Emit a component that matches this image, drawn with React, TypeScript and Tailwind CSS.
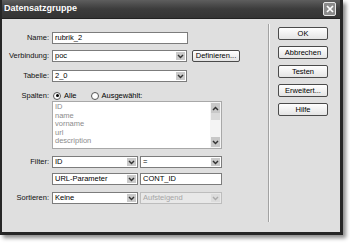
import React from "react"

const Chevron = ({ color = "#333" }: { color?: string }) => (
    <svg width="7" height="5" viewBox="0 0 7 5">
        <path d="M1 1 L3.5 3.6 L6 1" stroke={color} strokeWidth="1.4" fill="none" />
    </svg>
)

const ChevronUp = () => (
    <svg width="7" height="5" viewBox="0 0 7 5">
        <path d="M1 4 L3.5 1.4 L6 4" stroke="#333" strokeWidth="1.4" fill="none" />
    </svg>
)

const Select = ({ value, className = "", disabled = false }: { value: string; className?: string; disabled?: boolean }) => (
    <div
        className={`flex h-[12px] items-stretch border ${
            disabled ? "border-[#bdbdbd] bg-[#e8e8e8] text-[#a6a6a6]" : "border-[#7c7c7c] bg-white text-black"
        } ${className}`}
    >
        <span className="flex-1 truncate pl-[2px] leading-[10px]">{value}</span>
        <span className={`m-[1px] flex w-[9px] items-center justify-center ${disabled ? "bg-[#dcdcdc]" : "bg-[#cacaca]"}`}>
            <Chevron color={disabled ? "#aaa" : "#333"} />
        </span>
    </div>
)

const Input = ({ value, className = "" }: { value: string; className?: string }) => (
    <div className={`h-[12px] border border-[#7c7c7c] bg-white pl-[2px] leading-[10px] text-black ${className}`}>{value}</div>
)

const Label = ({ text }: { text: string }) => (
    <span className="w-[48px] shrink-0 pr-[1px] text-right leading-[12px] text-[#111]">{text}</span>
)

const Button = ({ text }: { text: string }) => (
    <button className="flex h-[13px] w-[50px] items-center justify-center rounded-[2px] border border-[#4a4a4a] bg-linear-to-b from-white to-[#e4e4e4] leading-none text-black">
        {text}
    </button>
)

const Radio = ({ checked }: { checked?: boolean }) => (
    <span className="flex h-[8px] w-[8px] items-center justify-center rounded-full border border-[#555] bg-white">
        {checked && <span className="h-[3px] w-[3px] rounded-full bg-black" />}
    </span>
)

const columns = ["ID", "name", "vorname", "url", "description"]

export default function App() {
    return (
        <div className="h-[245px] w-[350px] bg-white font-['Liberation_Sans',sans-serif] text-[7.5px]">
            <div className="flex h-[235px] w-[343px] flex-col border-b-[3px] border-l-2 border-r-[3px] border-[#262626] bg-[#dfdfdf] shadow-[3px_3px_4px_rgba(0,0,0,0.45)]">
                {/* Titelleiste */}
                <div className="flex h-[19px] shrink-0 items-center justify-between border-b border-[#222] bg-linear-to-b from-[#5e5e5e] via-[#3c3c3c] to-[#343434] pl-[2px] pr-[4px]">
                    <span className="text-[9px] font-bold text-white">Datensatzgruppe</span>
                    <span className="flex h-[14px] w-[13px] items-center justify-center rounded-[2px] border border-[#e6e6e6] bg-[#8a8a8a]">
                        <svg width="8" height="8" viewBox="0 0 8 8">
                            <path d="M1 1 L7 7 M7 1 L1 7" stroke="white" strokeWidth="1.7" />
                        </svg>
                    </span>
                </div>

                <div className="flex flex-1">
                    {/* Formular */}
                    <div className="flex w-[263px] flex-col pt-[13px]">
                        <div className="flex items-center">
                            <Label text="Name:" />
                            <Input value="rubrik_2" className="ml-[2px] w-[136px]" />
                        </div>
                        <div className="mt-[6px] flex items-center">
                            <Label text="Verbindung:" />
                            <Select value="poc" className="ml-[2px] w-[135px]" />
                            <button className="ml-[5px] flex h-[12px] w-[48px] items-center justify-center rounded-[2px] border border-[#4a4a4a] bg-linear-to-b from-white to-[#e4e4e4] leading-none">
                                Definieren...
                            </button>
                        </div>
                        <div className="mt-[8px] flex items-center">
                            <Label text="Tabelle:" />
                            <Select value="2_0" className="ml-[2px] w-[135px]" />
                        </div>
                        <div className="mt-[8px] flex h-[11px] items-center">
                            <Label text="Spalten:" />
                            <span className="ml-[3px] flex items-center gap-[3px]">
                                <Radio checked />
                                Alle
                            </span>
                            <span className="ml-[14px] flex items-center gap-[3px]">
                                <Radio />
                                Ausgewählt:
                            </span>
                        </div>
                        <div className="flex">
                            <span className="w-[48px]" />
                            <div className="ml-[2px] flex h-[48px] w-[170px] border border-[#a8a8a8] bg-white">
                                <div className="flex-1 pl-[2px] pt-[1px] leading-[8.5px] text-[#8c8c8c]">
                                    {columns.map((c) => (
                                        <div key={c}>{c}</div>
                                    ))}
                                </div>
                                <div className="flex w-[11px] flex-col bg-[#f4f4f4] p-[1px]">
                                    <span className="flex h-[10px] items-center justify-center bg-[#c8c8c8]">
                                        <ChevronUp />
                                    </span>
                                    <span className="h-[7px] bg-[#dadada]" />
                                    <span className="flex-1" />
                                    <span className="flex h-[10px] items-center justify-center bg-[#c8c8c8]">
                                        <Chevron />
                                    </span>
                                </div>
                            </div>
                        </div>
                        <div className="mt-[7px] flex items-center">
                            <Label text="Filter:" />
                            <Select value="ID" className="ml-[2px] w-[86px]" />
                            <Select value="=" className="ml-[2px] w-[82px]" />
                        </div>
                        <div className="mt-[5px] flex items-center">
                            <span className="w-[48px]" />
                            <Select value="URL-Parameter" className="ml-[2px] w-[86px]" />
                            <Input value="CONT_ID" className="ml-[2px] w-[82px]" />
                        </div>
                        <div className="mt-[7px] flex items-center">
                            <Label text="Sortieren:" />
                            <Select value="Keine" className="ml-[2px] w-[86px]" />
                            <Select value="Aufsteigend" disabled className="ml-[2px] w-[82px]" />
                        </div>
                    </div>

                    {/* Trennlinie */}
                    <div className="mb-[10px] ml-[3px] mt-[5px] w-[2px] border-l border-r border-l-[#a2a2a2] border-r-[#f6f6f6]" />

                    {/* Schaltflächen */}
                    <div className="ml-[8px] flex flex-col gap-[6px] pt-[8px]">
                        <Button text="OK" />
                        <Button text="Abbrechen" />
                        <Button text="Testen" />
                        <Button text="Erweitert..." />
                        <Button text="Hilfe" />
                    </div>
                </div>
            </div>
        </div>
    )
}
